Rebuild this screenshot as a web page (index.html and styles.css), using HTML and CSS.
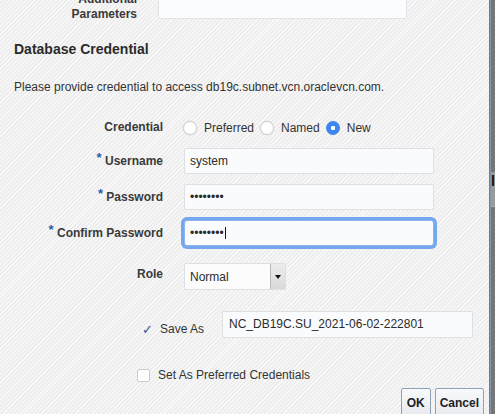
FILE: index.html
```html
<!DOCTYPE html>
<html>
<head>
<meta charset="utf-8">
<link rel="stylesheet" href="styles.css">
</head>
<body>
<div class="page">
  <div class="dialog">
    <div class="addl">
      <div class="addl-label">Additional<br>Parameters</div>
      <div class="textarea"></div>
    </div>
    <h2 class="heading">Database Credential</h2>
    <p class="intro">Please provide credential to access db19c.subnet.vcn.oraclevcn.com.</p>

    <div class="row row-radio">
      <div class="label">Credential</div>
      <div class="radios">
        <span class="opt"><span class="radio"></span>Preferred</span>
        <span class="opt"><span class="radio"></span>Named</span>
        <span class="opt"><span class="radio on"></span>New</span>
      </div>
    </div>

    <div class="row row-input">
      <div class="label"><span class="req">*</span> Username</div>
      <div class="input">system</div>
    </div>
    <div class="row row-input">
      <div class="label"><span class="req">*</span> Password</div>
      <div class="input dots">&bull;&bull;&bull;&bull;&bull;&bull;&bull;&bull;</div>
    </div>
    <div class="row row-input">
      <div class="label"><span class="req">*</span> Confirm Password</div>
      <div class="input dots focus">&bull;&bull;&bull;&bull;&bull;&bull;&bull;&bull;<span class="caret"></span></div>
    </div>

    <div class="row row-role">
      <div class="label role-label">Role</div>
      <div class="select"><span class="select-text">Normal</span><span class="select-btn"><span class="tri"></span></span></div>
    </div>

    <div class="saveas">
      <span class="check">&#10003;</span>
      <span class="saveas-text">Save As</span>
      <div class="input wide">NC_DB19C.SU_2021-06-02-222801</div>
    </div>

    <div class="prefrow">
      <span class="checkbox"></span>
      <span>Set As Preferred Credentials</span>
    </div>

    <div class="buttons">
      <button class="btn">OK</button>
      <button class="btn">Cancel</button>
    </div>
  </div>
  <div class="side">
    <div class="side-a"></div>
    <div class="side-b">le</div>
    <div class="side-c"></div>
  </div>
</div>
</body>
</html>
```

FILE: styles.css
```css
html, body {
  margin: 0;
  padding: 0;
}
body {
  font-family: "Liberation Sans", Arial, Helvetica, sans-serif;
  font-size: 12px;
  color: #333;
  overflow: hidden;
}
.page {
  display: flex;
  width: 495px;
  height: 414px;
  overflow: hidden;
}
.dialog {
  width: 489px;
  flex: none;
  border-right: 1px solid #6b7f96;
  background: repeating-linear-gradient(135deg, #f7f7f7 0 1.6px, #ececec 1.6px 3px);
  display: flex;
  flex-direction: column;
}
.addl {
  display: flex;
  gap: 21px;
  margin-top: -21px;
}
.addl-label {
  width: 137px;
  text-align: right;
  font-weight: bold;
  line-height: 15px;
  margin-top: 13px;
  color: #3a3a3a;
}
.textarea {
  width: 247px;
  height: 38px;
  border: 1px solid #dfe3e8;
  background: #fbfcfd;
  border-radius: 2px;
}
.heading {
  margin: 19px 0 0 14px;
  font-size: 14px;
  line-height: 17px;
  font-weight: bold;
  color: #2b2b2b;
}
.intro {
  margin: 22px 0 0 14px;
  line-height: 15px;
  color: #333;
}
.row {
  display: flex;
  align-items: center;
  gap: 21px;
}
.label {
  width: 163px;
  flex: none;
  text-align: right;
  font-weight: bold;
  color: #3a3a3a;
  line-height: 15px;
}
.req {
  color: #1f5fae;
  font-size: 13px;
  position: relative;
  top: -3px;
}
.row-radio {
  margin-top: 25px;
  height: 20px;
}
.radios {
  display: flex;
  align-items: center;
  gap: 6px;
  margin-left: -1px;
}
.opt {
  display: flex;
  align-items: center;
  gap: 7px;
  color: #333;
}
.radio {
  width: 12px;
  height: 12px;
  border-radius: 50%;
  border: 1px solid #cfcfcf;
  background: #fff;
  box-shadow: 0 0 0 0.5px #e4e4e4;
  display: inline-block;
  box-sizing: content-box;
}
.radio.on {
  border-color: #3d86ef;
  background: radial-gradient(circle, #fff 0 2px, #3d86ef 2.4px);
}
.row-input {
  margin-top: 10px;
}
.row-radio + .row-input {
  margin-top: 13px;
}
.input {
  width: 243px;
  height: 24px;
  border: 1px solid #dcdfe3;
  border-radius: 2px;
  background: #fafbfd;
  padding-left: 5px;
  line-height: 24px;
  font-size: 12px;
  color: #2b2b2b;
  box-sizing: content-box;
}
.focus {
  border-color: #8db4ee;
  box-shadow: 0 0 0 3px #76a6ee;
  border-radius: 3px;
  display: flex;
  align-items: center;
}
.caret {
  width: 1px;
  height: 12px;
  background: #111;
  margin-left: 1px;
}
.row-role {
  margin-top: 17px;
  align-items: flex-start;
}
.role-label {
  padding-top: 4px;
}
.select {
  width: 100px;
  height: 25px;
  border: 1px solid #dcdfe3;
  background: #fcfcfd;
  display: flex;
  border-radius: 2px;
}
.select-text {
  flex: 1;
  padding-left: 5px;
  line-height: 26px;
  color: #2b2b2b;
}
.select-btn {
  width: 14px;
  border-left: 1px solid #b9b9b9;
  background: linear-gradient(#ececec, #d9d9d9);
  display: flex;
  align-items: center;
  justify-content: center;
}
.tri {
  width: 0;
  height: 0;
  border-left: 3px solid transparent;
  border-right: 3px solid transparent;
  border-top: 4px solid #111;
  margin-top: 1px;
}
.saveas {
  display: flex;
  align-items: flex-end;
  margin-top: 21px;
  padding-left: 142px;
}
.check {
  color: #2e54a5;
  font-size: 13px;
  line-height: 15px;
  width: 18px;
  margin-bottom: 1px;
}
.saveas-text {
  width: 62px;
  line-height: 15px;
  margin-bottom: 1px;
  color: #333;
}
.input.wide {
  width: 243px;
  height: 25px;
  line-height: 25px;
  padding-left: 6px;
}
.prefrow {
  display: flex;
  align-items: center;
  gap: 8px;
  padding-left: 137px;
  margin-top: 30px;
  line-height: 15px;
  color: #333;
}
.checkbox {
  width: 11px;
  height: 11px;
  border: 1px solid #cdcdcd;
  border-radius: 2px;
  background: #fff;
  display: inline-block;
}
.buttons {
  display: flex;
  justify-content: flex-end;
  gap: 4px;
  padding-right: 5px;
  margin-top: 5px;
}
.btn {
  font-family: "Liberation Sans", Arial, sans-serif;
  font-size: 12px;
  font-weight: bold;
  color: #222;
  height: 30px;
  padding: 0 4px;
  border: 1px solid #8fa2b8;
  border-radius: 2px;
  background: linear-gradient(#f8f9fb, #e6e9ee);
}
.btn:first-child {
  padding: 0 5px;
}
.side {
  flex: 1;
  display: flex;
  flex-direction: column;
  background: repeating-linear-gradient(135deg, #7b7b7b 0 1.6px, #717171 1.6px 3px);
  border-left: 1px solid #8195ab;
  overflow: hidden;
}
.side-a {
  height: 172px;
}
.side-b {
  height: 35px;
  background: #9a9a9a;
  color: #111;
  font-weight: bold;
  font-size: 14px;
  line-height: 16px;
  padding-top: 1px;
  box-sizing: border-box;
  border-bottom: 1px solid #a8a8a8;
  white-space: nowrap;
}
.side-c {
  flex: 1;
}
```
